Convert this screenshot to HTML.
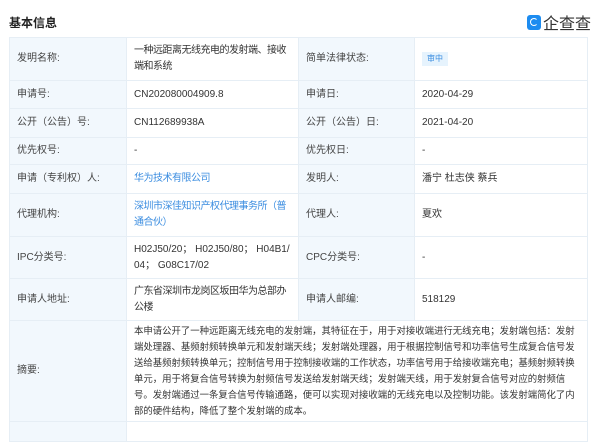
<!DOCTYPE html>
<html><head><meta charset="utf-8"><style>
body{margin:0;width:600px;height:427px;background:#fff;overflow:hidden;font-family:"Liberation Sans","Noto Sans CJK SC",sans-serif;color:#333;position:relative}
.t{position:absolute;left:9px;top:14px;font-size:12px;font-weight:bold;color:#222}
.logo{position:absolute;left:527px;top:10px;font-size:16px;color:#333;display:flex;align-items:center}
.ic{width:14px;height:15px;background:#1d8cf0;border-radius:3px;margin-right:2px;position:relative}
.ic:after{content:"";position:absolute;left:3px;top:3px;width:6px;height:6px;border:1.5px solid #fff;border-radius:50%;border-right-color:transparent}
table{position:absolute;left:9px;top:37px;border-collapse:collapse;width:578px;font-size:10px;table-layout:fixed}
td{border:1px solid #e6eef5;padding:0 7px;vertical-align:middle;line-height:16px;white-space:nowrap}
td.v{letter-spacing:-0.5px;padding-right:0}
td.l{background:#f2f8fd;color:#444}
td.ab{font-size:9.4px;line-height:16px;padding-right:0}
a{color:#3b8de0;text-decoration:none}
.tag{display:inline-block;background:#e6f3fd;color:#3b8de0;font-size:8px;padding:0 5px;line-height:14px}
</style></head><body>
<div class="t">基本信息</div>
<div class="logo"><div class="ic"></div>企查查</div>
<table>
<colgroup><col style="width:117px"><col style="width:172px"><col style="width:116px"><col style="width:173px"></colgroup>
<tr style="height:43px"><td class="l">发明名称:</td><td class="v">一种远距离无线充电的发射端、接收<br>端和系统</td><td class="l">简单法律状态:</td><td><span class="tag">审中</span></td></tr>
<tr style="height:28px"><td class="l">申请号:</td><td>CN202080004909.8</td><td class="l">申请日:</td><td>2020-04-29</td></tr>
<tr style="height:29px"><td class="l">公开（公告）号:</td><td>CN112689938A</td><td class="l">公开（公告）日:</td><td>2021-04-20</td></tr>
<tr style="height:27px"><td class="l">优先权号:</td><td>-</td><td class="l">优先权日:</td><td>-</td></tr>
<tr style="height:29px"><td class="l">申请（专利权）人:</td><td class="v"><a>华为技术有限公司</a></td><td class="l">发明人:</td><td>潘宁 杜志侠 蔡兵</td></tr>
<tr style="height:43px"><td class="l">代理机构:</td><td class="v"><a>深圳市深佳知识产权代理事务所（普<br>通合伙）</a></td><td class="l">代理人:</td><td>夏欢</td></tr>
<tr style="height:42px"><td class="l">IPC分类号:</td><td>H02J50/20；&nbsp;H02J50/80；&nbsp;H04B1/<br>04；&nbsp;G08C17/02</td><td class="l">CPC分类号:</td><td>-</td></tr>
<tr style="height:42px"><td class="l">申请人地址:</td><td class="v">广东省深圳市龙岗区坂田华为总部办<br>公楼</td><td class="l">申请人邮编:</td><td>518129</td></tr>
<tr style="height:101px"><td class="l">摘要:</td><td colspan="3" class="ab">本申请公开了一种远距离无线充电的发射端，其特征在于，用于对接收端进行无线充电；发射端包括：发射<br>端处理器、基频射频转换单元和发射端天线；发射端处理器，用于根据控制信号和功率信号生成复合信号发<br>送给基频射频转换单元；控制信号用于控制接收端的工作状态，功率信号用于给接收端充电；基频射频转换<br>单元，用于将复合信号转换为射频信号发送给发射端天线；发射端天线，用于发射复合信号对应的射频信<br>号。发射端通过一条复合信号传输通路，便可以实现对接收端的无线充电以及控制功能。该发射端简化了内<br>部的硬件结构，降低了整个发射端的成本。</td></tr>
<tr style="height:20px"><td class="l"></td><td colspan="3"></td></tr>
</table>
</body></html>
